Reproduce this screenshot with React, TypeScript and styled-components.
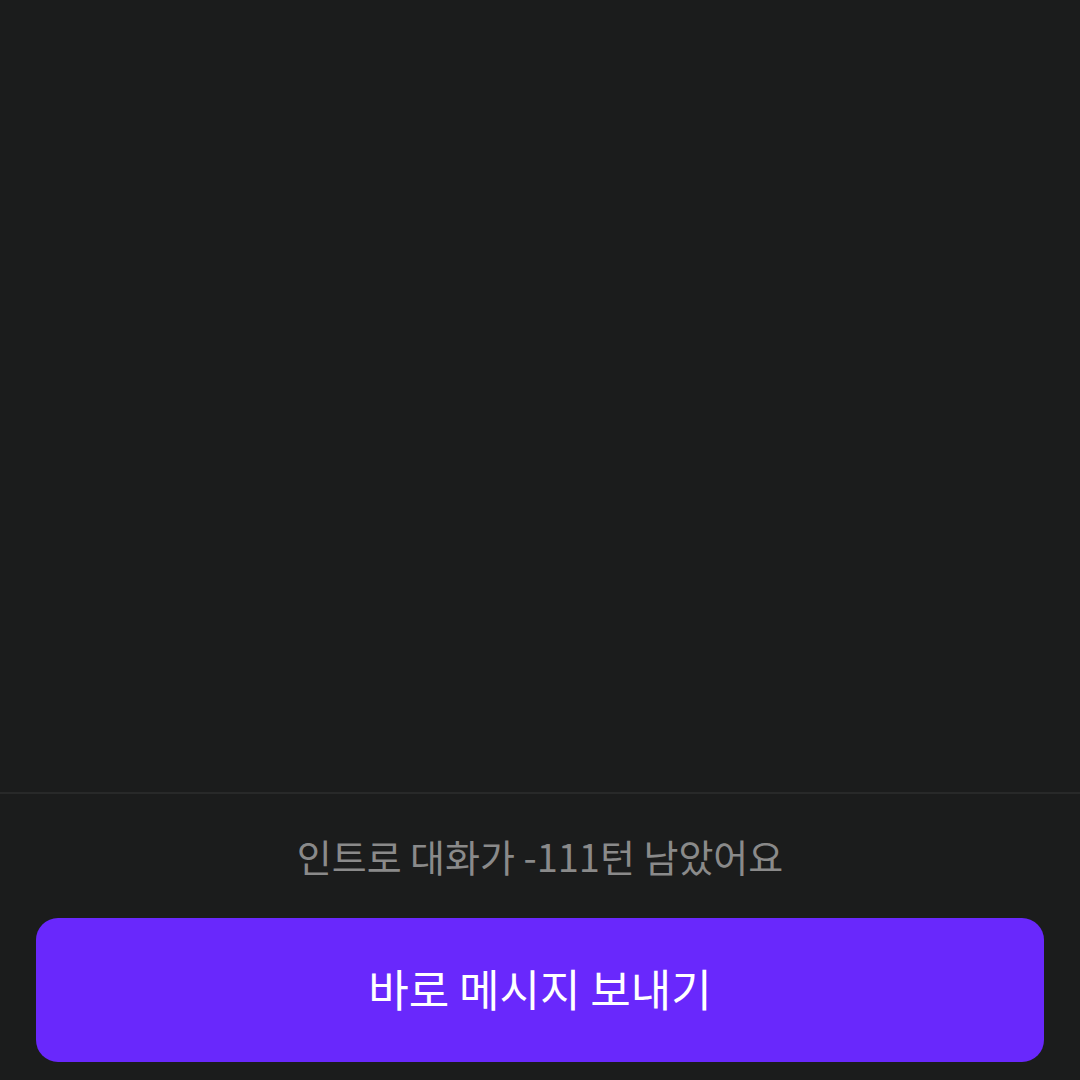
import * as React from 'react';
import styled, { createGlobalStyle } from 'styled-components';

const GlobalStyle = createGlobalStyle`
  html, body {
    margin: 0;
    padding: 0;
    background: #1b1c1c;
  }
  body {
    font-family: "Noto Sans CJK KR", "Noto Sans", sans-serif;
  }
`;

const Screen = styled.div`
  width: 100%;
  height: 100vh;
  display: flex;
  flex-direction: column;
  background: #1b1c1c;
`;

const ChatArea = styled.div`
  flex: 1;
`;

const Footer = styled.div`
  display: flex;
  flex-direction: column;
  align-items: center;
  border-top: 2px solid #282929;
  padding: 0 36px 18px;
`;

const TurnHint = styled.p`
  margin: 0;
  height: 122px;
  padding-bottom: 2px;
  display: flex;
  align-items: center;
  font-size: 38px;
  color: #8a8a8a;
`;

const SendButton = styled.button`
  width: 100%;
  height: 144px;
  padding: 0 0 4px;
  border: none;
  border-radius: 22px;
  background: #6928fc;
  color: #ffffff;
  font-family: "Noto Sans CJK KR", "Noto Sans", sans-serif;
  font-size: 44px;
  font-weight: 400;
  cursor: pointer;
`;

export default function App() {
  return (
    <>
      <GlobalStyle />
      <Screen>
        <ChatArea />
        <Footer>
          <TurnHint>인트로 대화가 -111턴 남았어요</TurnHint>
          <SendButton>바로 메시지 보내기</SendButton>
        </Footer>
      </Screen>
    </>
  );
}
